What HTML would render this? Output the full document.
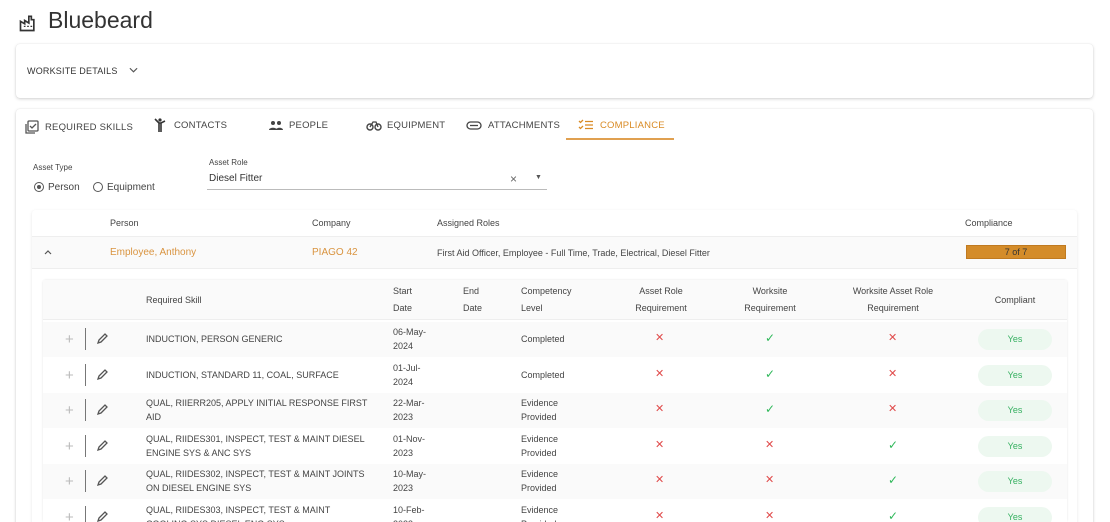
<!DOCTYPE html>
<html><head><meta charset="utf-8"><style>
*{box-sizing:border-box;margin:0;padding:0}
html,body{width:1110px;height:522px;overflow:hidden}
body{background:#fff;font-family:"Liberation Sans",sans-serif;color:#333;position:relative}
.abs{position:absolute}
.card{position:absolute;background:#fff;border-radius:4px;box-shadow:0 1px 3px rgba(0,0,0,.18),0 0 1px rgba(0,0,0,.1)}
.tab{position:absolute;top:120px;font-size:9.5px;letter-spacing:.2px;color:#444;display:flex;align-items:center;gap:6px}
.sm{font-size:9px;color:#444}
.hd{font-size:9px;color:#444;position:absolute;line-height:17px}
.row{position:absolute;left:43px;width:1024px;height:35px}
.cell{position:absolute;font-size:9px;color:#444;line-height:14px}
.x{position:absolute;color:#e04b4b;font-size:11px;line-height:12px}
.ck{position:absolute;color:#2fb85a;font-size:12px;line-height:12px}
.pill{position:absolute;left:935px;width:74px;height:21px;border-radius:11px;background:#edf8f0;color:#35b060;font-size:9px;text-align:center;line-height:21px}
.plus{position:absolute;left:22px;color:#bbb;font-size:15px;line-height:15px}
.div{position:absolute;left:42px;width:1px;height:22px;background:#777}
.pen{position:absolute;left:53px}
</style></head><body>
<svg class="abs" style="left:18px;top:13px" width="20" height="20" viewBox="0 0 24 24"><path d="M3 21V10l5 3V9l5 3V4h3v4h3v13z" fill="none" stroke="#333" stroke-width="2"/><path d="M7 16h2M11 16h2M15 16h2" stroke="#333" stroke-width="1.5"/></svg>
<div class="abs" style="left:48px;top:7px;font-size:23px;color:#333">Bluebeard</div>

<div class="card" style="left:16px;top:44px;width:1077px;height:54px"></div>
<div class="abs" style="left:27px;top:66px;font-size:9px;color:#333;letter-spacing:.2px">WORKSITE DETAILS</div>
<svg class="abs" style="left:129px;top:67px" width="9" height="7" viewBox="0 0 10 7"><path d="M1 1l4 4 4-4" fill="none" stroke="#555" stroke-width="1.3"/></svg>

<div class="card" style="left:16px;top:109px;width:1077px;height:430px"></div>

<div class="tab" style="left:25px"><svg width="14" height="14" viewBox="0 0 14 14"><rect x="3" y="1" width="10" height="10" rx="1" fill="none" stroke="#555" stroke-width="1.3"/><path d="M1 4v9h9" fill="none" stroke="#555" stroke-width="1.3"/><path d="M5 6l2 2 4-4" fill="none" stroke="#555" stroke-width="1.3"/></svg>REQUIRED SKILLS</div>
<svg class="abs" style="left:154px;top:118px" width="12" height="15" viewBox="0 0 12 15"><circle cx="6" cy="2" r="1.6" fill="#333"/><path d="M1 1l4 4v9M7 5v9M5 5h2l4-2" fill="none" stroke="#333" stroke-width="1.6"/></svg>
<div class="tab" style="left:174px">CONTACTS</div>
<svg class="abs" style="left:268px;top:120px" width="16" height="11" viewBox="0 0 16 11"><circle cx="5" cy="3" r="2" fill="#444"/><circle cx="11" cy="3" r="2" fill="#444"/><path d="M1 10c0-3 8-3 8 0zM8 10c0-3 7-3 7 0z" fill="#444"/></svg>
<div class="tab" style="left:289px">PEOPLE</div>
<svg class="abs" style="left:366px;top:120px" width="16" height="11" viewBox="0 0 16 11"><circle cx="4" cy="7" r="3" fill="none" stroke="#444" stroke-width="1.4"/><circle cx="12" cy="7" r="3" fill="none" stroke="#444" stroke-width="1.4"/><path d="M4 7l3-5h3l2 5" fill="none" stroke="#444" stroke-width="1.3"/></svg>
<div class="tab" style="left:387px">EQUIPMENT</div>
<svg class="abs" style="left:466px;top:121px" width="16" height="9" viewBox="0 0 16 9"><rect x="1" y="1" width="14" height="7" rx="3.5" fill="none" stroke="#444" stroke-width="1.3"/><path d="M4 4.5h8" stroke="#444" stroke-width="1.3"/></svg>
<div class="tab" style="left:488px">ATTACHMENTS</div>
<svg class="abs" style="left:578px;top:119px" width="16" height="12" viewBox="0 0 16 12"><path d="M1 2l1.5 1.5L5 1M1 8l1.5 1.5L5 7" fill="none" stroke="#d98b25" stroke-width="1.3"/><path d="M7 2.5h8M7 6h8M7 9.5h8" stroke="#d98b25" stroke-width="1.3"/></svg>
<div class="tab" style="left:600px;color:#d98b25">COMPLIANCE</div>
<div class="abs" style="left:566px;top:138px;width:108px;height:2px;background:#e0a050"></div>

<div class="abs sm" style="left:33px;top:163px;font-size:8px">Asset Type</div>
<div class="abs" style="left:34px;top:182px;width:10px;height:10px;border:1px solid #555;border-radius:50%"></div>
<div class="abs" style="left:37px;top:185px;width:4px;height:4px;background:#555;border-radius:50%"></div>
<div class="abs sm" style="left:48px;top:182px;font-size:10px">Person</div>
<div class="abs" style="left:93px;top:182px;width:10px;height:10px;border:1px solid #555;border-radius:50%"></div>
<div class="abs sm" style="left:107px;top:182px;font-size:10px">Equipment</div>
<div class="abs sm" style="left:209px;top:158px;font-size:8px">Asset Role</div>
<div class="abs sm" style="left:209px;top:173px;font-size:10px;color:#333">Diesel Fitter</div>
<div class="abs" style="left:510px;top:172px;font-size:12px;color:#666">×</div>
<div class="abs" style="left:535px;top:174px;font-size:7px;color:#555">▼</div>
<div class="abs" style="left:207px;top:189px;width:340px;height:1px;background:#bbb"></div>

<div class="card" style="left:32px;top:210px;width:1045px;height:330px;box-shadow:0 1px 3px rgba(0,0,0,.1)"></div>
<div class="hd" style="left:110px;top:215px">Person</div>
<div class="hd" style="left:312px;top:215px">Company</div>
<div class="hd" style="left:437px;top:215px">Assigned Roles</div>
<div class="hd" style="left:965px;top:215px">Compliance</div>
<div class="abs" style="left:32px;top:236px;width:1045px;height:33px;background:#fafafa;border-top:1px solid #eee;border-bottom:1px solid #eee"></div>
<svg class="abs" style="left:44px;top:250px" width="8" height="5" viewBox="0 0 8 5"><path d="M1 4l3-3 3 3" fill="none" stroke="#555" stroke-width="1.2"/></svg>
<div class="abs" style="left:110px;top:247px;font-size:10px;color:#d99440">Employee, Anthony</div>
<div class="abs" style="left:312px;top:247px;font-size:10px;color:#d99440">PIAGO 42</div>
<div class="abs sm" style="left:437px;top:248px;font-size:9px">First Aid Officer, Employee - Full Time, Trade, Electrical, Diesel Fitter</div>
<div class="abs" style="left:966px;top:245px;width:100px;height:14px;background:#d48c2a;border:1px solid #c07a20;font-size:9px;text-align:center;line-height:12px;color:#333">7 of 7</div>

<div class="abs" style="left:43px;top:280px;width:1024px;height:242px;box-shadow:0 0 2px rgba(0,0,0,.12);border-radius:3px;background:#fff"></div>
<div class="abs" style="left:43px;top:280px;width:1024px;height:40px;background:#fafafa;border-bottom:1px solid #eee"></div>
<div class="hd" style="left:146px;top:292px">Required Skill</div>
<div class="hd" style="left:393px;top:283px">Start<br>Date</div>
<div class="hd" style="left:463px;top:283px">End<br>Date</div>
<div class="hd" style="left:521px;top:283px">Competency<br>Level</div>
<div class="hd" style="left:611px;top:283px;width:100px;text-align:center">Asset Role<br>Requirement</div>
<div class="hd" style="left:720px;top:283px;width:100px;text-align:center">Worksite<br>Requirement</div>
<div class="hd" style="left:833px;top:283px;width:120px;text-align:center">Worksite Asset Role<br>Requirement</div>
<div class="hd" style="left:965px;top:292px;width:100px;text-align:center">Compliant</div>

<div class="row" style="top:322px;background:#fafafa"><span class="plus" style="top:10px">+</span><span class="div" style="top:6px"></span><svg class="pen" style="top:11px" width="12" height="12" viewBox="0 0 12 12"><path d="M2 10l1-3 6-6 2 2-6 6z" fill="none" stroke="#555" stroke-width="1.3"/></svg>
<span class="cell" style="left:103px;top:10px">INDUCTION, PERSON GENERIC</span><span class="cell" style="left:350px;top:3px">06-May-<br>2024</span><span class="cell" style="left:478px;top:10px">Completed</span><span class="x" style="left:612px;top:10px">✕</span><span class="ck" style="left:722px;top:10px">✓</span><span class="x" style="left:845px;top:10px">✕</span><span class="pill" style="top:7px">Yes</span></div>
<div class="row" style="top:358px;background:#fff"><span class="plus" style="top:10px">+</span><span class="div" style="top:6px"></span><svg class="pen" style="top:11px" width="12" height="12" viewBox="0 0 12 12"><path d="M2 10l1-3 6-6 2 2-6 6z" fill="none" stroke="#555" stroke-width="1.3"/></svg>
<span class="cell" style="left:103px;top:10px">INDUCTION, STANDARD 11, COAL, SURFACE</span><span class="cell" style="left:350px;top:3px">01-Jul-<br>2024</span><span class="cell" style="left:478px;top:10px">Completed</span><span class="x" style="left:612px;top:10px">✕</span><span class="ck" style="left:722px;top:10px">✓</span><span class="x" style="left:845px;top:10px">✕</span><span class="pill" style="top:7px">Yes</span></div>
<div class="row" style="top:393px;background:#fafafa"><span class="plus" style="top:10px">+</span><span class="div" style="top:6px"></span><svg class="pen" style="top:11px" width="12" height="12" viewBox="0 0 12 12"><path d="M2 10l1-3 6-6 2 2-6 6z" fill="none" stroke="#555" stroke-width="1.3"/></svg>
<span class="cell" style="left:103px;top:3px">QUAL, RIIERR205, APPLY INITIAL RESPONSE FIRST<br>AID</span><span class="cell" style="left:350px;top:3px">22-Mar-<br>2023</span><span class="cell" style="left:478px;top:3px">Evidence<br>Provided</span><span class="x" style="left:612px;top:10px">✕</span><span class="ck" style="left:722px;top:10px">✓</span><span class="x" style="left:845px;top:10px">✕</span><span class="pill" style="top:7px">Yes</span></div>
<div class="row" style="top:429px;background:#fff"><span class="plus" style="top:10px">+</span><span class="div" style="top:6px"></span><svg class="pen" style="top:11px" width="12" height="12" viewBox="0 0 12 12"><path d="M2 10l1-3 6-6 2 2-6 6z" fill="none" stroke="#555" stroke-width="1.3"/></svg>
<span class="cell" style="left:103px;top:3px">QUAL, RIIDES301, INSPECT, TEST &amp; MAINT DIESEL<br>ENGINE SYS &amp; ANC SYS</span><span class="cell" style="left:350px;top:3px">01-Nov-<br>2023</span><span class="cell" style="left:478px;top:3px">Evidence<br>Provided</span><span class="x" style="left:612px;top:10px">✕</span><span class="x" style="left:722px;top:10px">✕</span><span class="ck" style="left:845px;top:10px">✓</span><span class="pill" style="top:7px">Yes</span></div>
<div class="row" style="top:464px;background:#fafafa"><span class="plus" style="top:10px">+</span><span class="div" style="top:6px"></span><svg class="pen" style="top:11px" width="12" height="12" viewBox="0 0 12 12"><path d="M2 10l1-3 6-6 2 2-6 6z" fill="none" stroke="#555" stroke-width="1.3"/></svg>
<span class="cell" style="left:103px;top:3px">QUAL, RIIDES302, INSPECT, TEST &amp; MAINT JOINTS<br>ON DIESEL ENGINE SYS</span><span class="cell" style="left:350px;top:3px">10-May-<br>2023</span><span class="cell" style="left:478px;top:3px">Evidence<br>Provided</span><span class="x" style="left:612px;top:10px">✕</span><span class="x" style="left:722px;top:10px">✕</span><span class="ck" style="left:845px;top:10px">✓</span><span class="pill" style="top:7px">Yes</span></div>
<div class="row" style="top:500px;background:#fff"><span class="plus" style="top:10px">+</span><span class="div" style="top:6px"></span><svg class="pen" style="top:11px" width="12" height="12" viewBox="0 0 12 12"><path d="M2 10l1-3 6-6 2 2-6 6z" fill="none" stroke="#555" stroke-width="1.3"/></svg>
<span class="cell" style="left:103px;top:3px">QUAL, RIIDES303, INSPECT, TEST &amp; MAINT<br>COOLING SYS DIESEL ENG SYS</span><span class="cell" style="left:350px;top:3px">10-Feb-<br>2023</span><span class="cell" style="left:478px;top:3px">Evidence<br>Provided</span><span class="x" style="left:612px;top:10px">✕</span><span class="x" style="left:722px;top:10px">✕</span><span class="ck" style="left:845px;top:10px">✓</span><span class="pill" style="top:7px">Yes</span></div>
</body></html>
